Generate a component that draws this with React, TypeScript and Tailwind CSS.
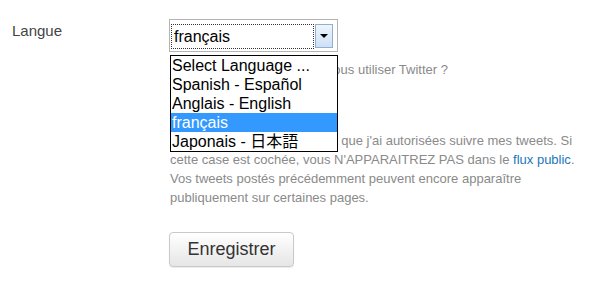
import React from "react";

const languages = [
  "Select Language ...",
  "Spanish - Español",
  "Anglais - English",
  "français",
  "Japonais - 日本語",
];

export default function App() {
  const selected = "français";

  return (
    <div
      className="w-[610px] h-[287px] bg-white overflow-hidden"
      style={{ fontFamily: '"Liberation Sans", Arial, "Noto Sans CJK JP", sans-serif' }}
    >
      <div className="grid grid-cols-[169px_1fr] pt-[19px]">
        {/* label column */}
        <div className="pl-[12px] pt-[3px] text-[15px] leading-[17px] text-[#444]">Langue</div>

        {/* select + dropdown */}
        <div className="relative">
          <div className="flex w-[169px] h-[33px] border border-[#b4b4b4] bg-white pl-[1px] pr-[4px] pt-[4px] pb-[2px]">
            <div className="flex-1 border border-dotted border-[#333] text-[16px] leading-[23px] text-black pl-[2px]">
              {selected}
            </div>
            <div className="ml-[1px] w-[18px] h-[24px] border border-[#8fb0d6] bg-gradient-to-b from-[#eef5fc] to-[#cfe0f3] flex items-center justify-center">
              <div className="w-0 h-0 border-l-[4px] border-r-[4px] border-t-[4px] border-l-transparent border-r-transparent border-t-black" />
            </div>
          </div>

          <div className="mt-[8px] pl-[1px] text-[13px] leading-[19px] text-[#8a8a8a] whitespace-nowrap">
            Dans quelle langue voulez-vous utiliser Twitter ?
          </div>

          <label className="mt-[18px] pl-[1px] flex items-center gap-[5px] text-[13px] leading-[19px] text-[#444]">
            <input type="checkbox" className="w-[13px] h-[13px]" />
            Protéger mes tweets
          </label>

          <div className="mt-[15px] pl-[1px] text-[13px] leading-[19px] text-[#8a8a8a] whitespace-nowrap">
            Ne laisser que les personnes que j'ai autorisées suivre mes tweets. Si
            <br />
            cette case est cochée, vous N'APPARAITREZ PAS dans le{" "}
            <a className="text-[#2276bb]">flux public</a>.
            <br />
            Vos tweets postés précédemment peuvent encore apparaître
            <br />
            publiquement sur certaines pages.
          </div>

          <button className="mt-[25px] w-[125px] h-[35px] rounded-[4px] border border-[#c9c9c9] bg-gradient-to-b from-white to-[#e6e6e6] text-[18px] text-[#333] shadow-[0_1px_1px_rgba(0,0,0,0.08)]">
            Enregistrer
          </button>

          {/* open dropdown list */}
          <ul className="absolute left-[1px] top-[36px] w-[168px] border border-black bg-white text-[16px] leading-[19px] text-black">
            {languages.map((lang) => (
              <li
                key={lang}
                className={`h-[19px] pl-[1px] whitespace-nowrap ${
                  lang === selected ? "bg-[#3399ff] text-white" : ""
                }`}
              >
                {lang}
              </li>
            ))}
          </ul>
        </div>
      </div>
    </div>
  );
}
